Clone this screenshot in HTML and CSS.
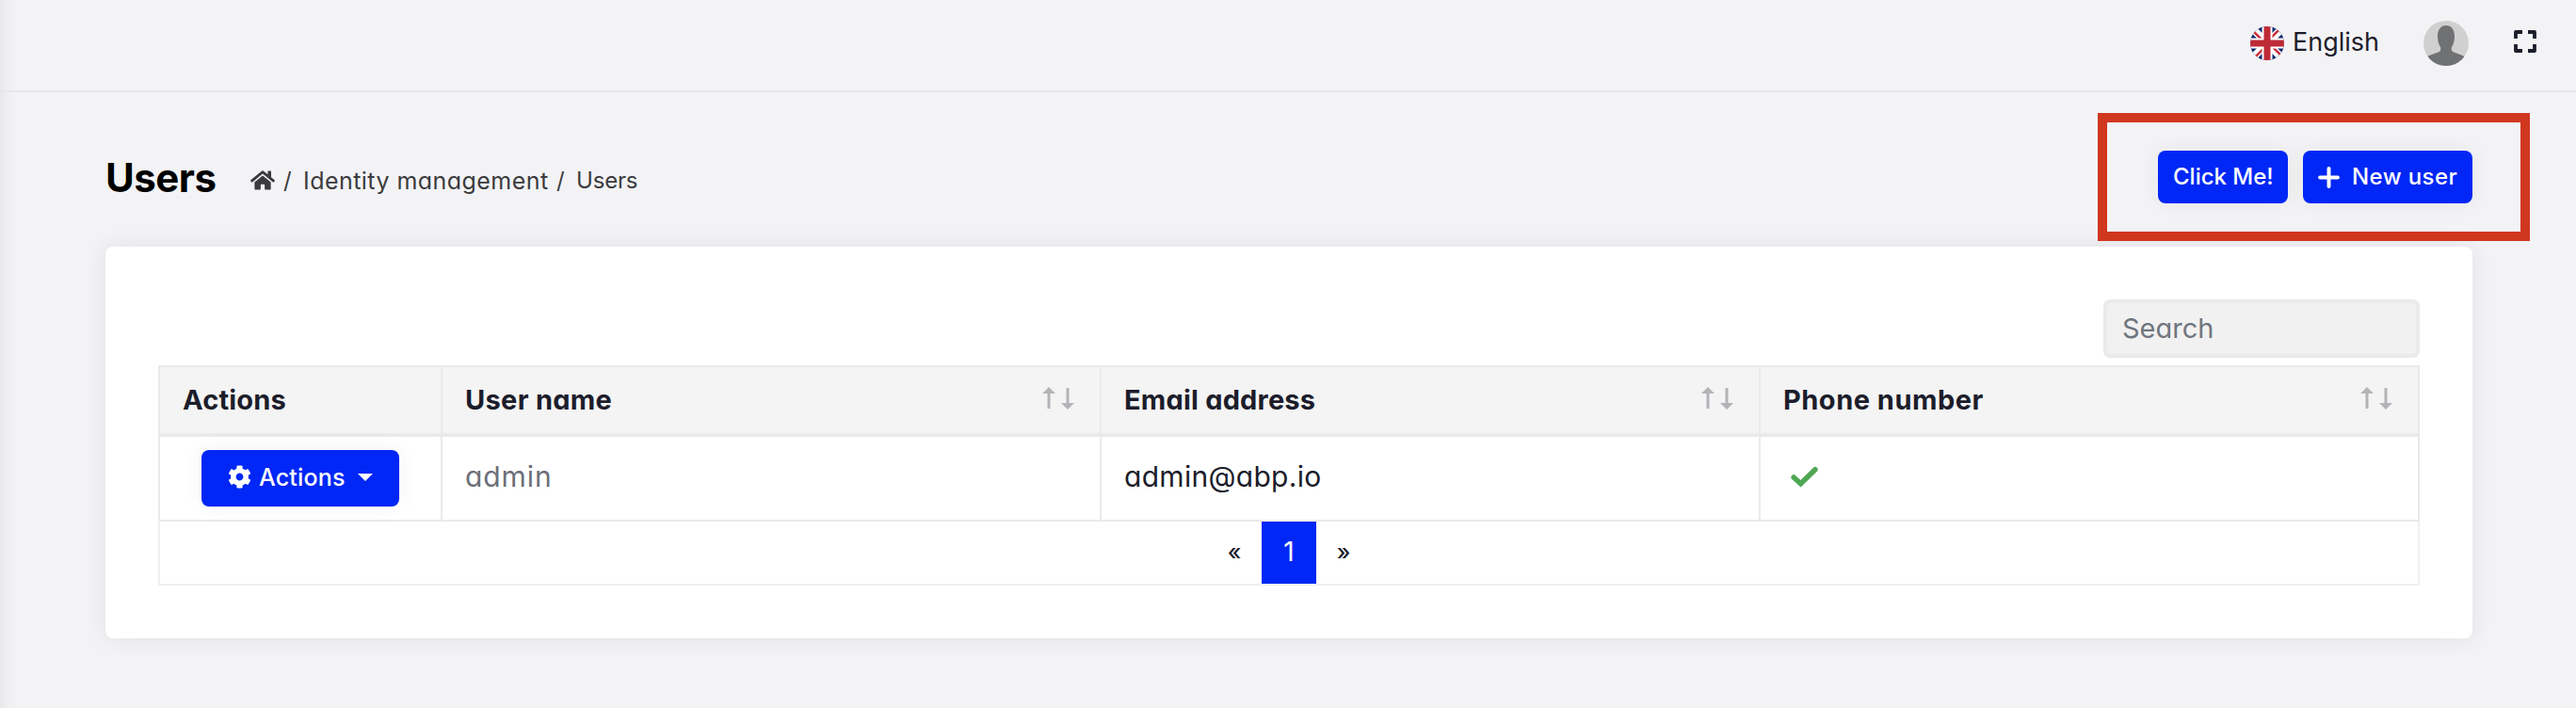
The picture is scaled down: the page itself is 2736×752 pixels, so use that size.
FILE: index.html
```html
<!DOCTYPE html>
<html lang="en">
<head>
<meta charset="utf-8">
<title>Users</title>
<link rel="stylesheet" href="styles.css">
</head>
<body>
<header class="topbar">
  <a class="language">
    <svg class="flag" viewBox="0 0 36 36"><defs><clipPath id="round"><circle cx="18" cy="18" r="18"/></clipPath></defs><g clip-path="url(#round)"><rect width="36" height="36" fill="#0d2a6c"/><path d="M0 0 36 36M36 0 0 36" stroke="#fff" stroke-width="8"/><path d="M0 1.800 18 19.800M36 -1.800 18 16.200M18 16.200 36 34.200M18 19.800 0 37.800" stroke="#c8303e" stroke-width="2.600"/><path d="M18 0V36M0 18H36" stroke="#fff" stroke-width="11"/><path d="M18 0V36M0 18H36" stroke="#bd2b36" stroke-width="7"/></g></svg>
    <span class="language-name">English</span>
  </a>
  <svg class="avatar" viewBox="0 0 48 48"><defs><clipPath id="face"><circle cx="24" cy="24" r="24"/></clipPath></defs><g clip-path="url(#face)"><rect width="48" height="48" fill="#d0d0d0"/><path d="M24 5C29.500 5 33 9.500 33 16.500C33 21.500 31.500 26 29.800 28.200V31.500C31 34 38 35 43.500 38V48H4V38C10 35 17 34 18.200 31.500V28.200C16.500 26 15 21.500 15 16.500C15 9.500 18.500 5 24 5Z" fill="#707173"/></g></svg>
  <svg class="expand" viewBox="0 0 24 24"><path d="M2 9V2H9M15 2H22V9M22 15V22H15M9 22H2V15" fill="none" stroke="#1c1d2b" stroke-width="3.800" stroke-linejoin="round"/></svg>
</header>
<main class="page">
  <div class="page-head">
    <h1 class="title">Users</h1>
    <nav class="crumbs">
      <svg class="home" viewBox="0 0 576 512"><path fill="#3b3b3d" d="M280.400 148.300 96 300.100V464a16 16 0 0 0 16 16l112.100-.3a16 16 0 0 0 15.900-16V368a16 16 0 0 1 16-16h64a16 16 0 0 1 16 16v95.600a16 16 0 0 0 16 16.100L464 480a16 16 0 0 0 16-16V300L295.700 148.300a12.200 12.200 0 0 0-15.300 0zM571.600 251.500 488 182.600V44.100a12 12 0 0 0-12-12h-56a12 12 0 0 0-12 12v72.600L318.500 43a48 48 0 0 0-61 0L4.300 251.500a12 12 0 0 0-1.600 16.900l25.500 31A12 12 0 0 0 45.200 301l235.200-193.700a12.200 12.200 0 0 1 15.300 0L530.900 301a12 12 0 0 0 16.900-1.600l25.500-31a12 12 0 0 0-1.700-16.900z"/></svg>
      <span class="slash">/</span><span class="crumb identity">Identity management</span><span class="slash">/</span><span class="crumb current">Users</span>
    </nav>
    <div class="head-actions">
      <button class="btn click-me"><span>Click Me!</span></button>
      <button class="btn new-user"><svg class="plus" viewBox="0 0 22 22"><path d="M11 2V20M2 11H20" stroke="#fff" stroke-width="3.800" stroke-linecap="round"/></svg><span>New user</span></button>
      <div class="highlight"></div>
    </div>
  </div>
  <section class="card">
    <input class="search" type="text" placeholder="Search">
    <div class="table">
      <div class="row head">
        <div class="cell"><b class="h-actions">Actions</b></div>
        <div class="cell"><b class="h-user">User name</b><svg class="sort" viewBox="0 0 34 24"><path d="M7 23V5M27 1V19" stroke="#b3b4b8" stroke-width="3"/><path d="M0 7 7 0 14 7ZM20 17 27 24 34 17Z" fill="#b3b4b8"/></svg></div>
        <div class="cell"><b class="h-email">Email address</b><svg class="sort" viewBox="0 0 34 24"><path d="M7 23V5M27 1V19" stroke="#b3b4b8" stroke-width="3"/><path d="M0 7 7 0 14 7ZM20 17 27 24 34 17Z" fill="#b3b4b8"/></svg></div>
        <div class="cell"><b class="h-phone">Phone number</b><svg class="sort" viewBox="0 0 34 24"><path d="M7 23V5M27 1V19" stroke="#b3b4b8" stroke-width="3"/><path d="M0 7 7 0 14 7ZM20 17 27 24 34 17Z" fill="#b3b4b8"/></svg></div>
      </div>
      <div class="row body">
        <div class="cell center"><button class="btn menu"><svg class="gear" viewBox="0 0 512 512"><path fill="#fff" d="M487.400 315.700l-42.600-24.600c4.300-23.200 4.300-47 0-70.200l42.600-24.600c4.900-2.800 7.100-8.600 5.500-14-11.100-35.600-30-67.800-54.700-94.600-3.800-4.100-10-5.100-14.800-2.300L380.800 110c-17.900-15.400-38.500-27.300-60.800-35.100V25.800c0-5.600-3.900-10.500-9.400-11.700-36.700-8.200-74.300-7.800-109.200 0-5.500 1.200-9.400 6.100-9.400 11.700V75c-22.200 7.900-42.800 19.800-60.800 35.100L88.700 85.500c-4.900-2.800-11-1.900-14.800 2.300-24.700 26.700-43.600 58.900-54.700 94.600-1.700 5.400.6 11.200 5.500 14L67.300 221c-4.300 23.200-4.300 47 0 70.200l-42.600 24.600c-4.900 2.800-7.100 8.600-5.500 14 11.100 35.600 30 67.800 54.700 94.600 3.800 4.100 10 5.100 14.800 2.300l42.600-24.600c17.900 15.400 38.500 27.300 60.800 35.100v49.200c0 5.600 3.900 10.500 9.400 11.700 36.700 8.200 74.300 7.800 109.200 0 5.500-1.200 9.400-6.100 9.400-11.700v-49.200c22.200-7.900 42.800-19.800 60.800-35.100l42.600 24.600c4.900 2.800 11 1.900 14.800-2.300 24.700-26.700 43.600-58.900 54.700-94.600 1.500-5.500-.7-11.300-5.600-14.100zM256 336c-44.100 0-80-35.900-80-80s35.900-80 80-80 80 35.900 80 80-35.900 80-80 80z"/></svg><span>Actions</span><i class="caret"></i></button></div>
        <div class="cell"><span class="admin">admin</span></div>
        <div class="cell"><span class="email">admin@abp.io</span></div>
        <div class="cell"><svg class="check" viewBox="0 0 28 22"><path d="M3 11.500 10.200 18 25 3.500" fill="none" stroke="#4fa754" stroke-width="5.400" stroke-linecap="round"/></svg></div>
      </div>
      <div class="pager"><span class="step">«</span><span class="page-no">1</span><span class="step">»</span></div>
    </div>
  </section>
</main>
</body>
</html>
```
FILE: styles.css
```css
* { box-sizing: border-box; }
body { margin: 0; height: 752px; overflow: hidden; background: #f3f3f6; color: #1c1d2b; font-family: Inter, "Open Sans", sans-serif; font-feature-settings: "cv11", "ss03"; font-size: 28px; line-height: 1; box-shadow: inset 20px 0 20px -20px rgba(0,0,0,.09); }
svg { display: block; flex: none; }
span, b, h1 { white-space: nowrap; }
.topbar { height: 98px; border-bottom: 2px solid #e6e6ee; display: flex; align-items: center; justify-content: flex-end; padding: 0 42px 4px 0; }
.language { display: flex; align-items: center; width: 184px; }
.flag { width: 36px; height: 36px; margin-right: 9px; }
.language-name { font-size: 27px; margin-top: -3px; }
.avatar { width: 48px; height: 48px; margin-right: 48px; }
.expand { width: 24px; height: 24px; margin-top: -4px; }
.page { padding: 62px 110px 0 112px; }
.page-head { height: 102px; display: flex; align-items: flex-start; }
.title { margin: 9px 0 0; width: 154px; font-size: 42px; line-height: 40px; font-weight: 700; letter-spacing: -.5px; color: #000; }
.crumbs { display: flex; align-items: center; height: 30px; margin-top: 17px; font-size: 24px; color: #3b3b3d; }
.home { width: 26px; height: 23px; margin-right: 9px; margin-top: -1px; }
.slash { width: 22px; }
.identity { width: 268px; margin-left: -1px; margin-right: 1px; font-size: 25px; letter-spacing: .45px; }
.current { margin-left: -1px; letter-spacing: -.2px; }
.head-actions { position: relative; margin-left: auto; display: flex; gap: 16px; }
.highlight { position: absolute; left: -64px; top: -40px; width: 459px; height: 136px; border: 10px solid #d0371f; }
.btn { border: 0; border-radius: 8px; background: #0027f5; color: #fff; height: 56px; padding: 0 16px; display: flex; align-items: center; font: inherit; font-size: 24px; font-weight: 500; font-feature-settings: inherit; box-shadow: 0 0 22px rgba(0,0,0,.06); }
.click-me { width: 138px; }
.new-user { width: 180px; letter-spacing: .4px; }
.plus { width: 23px; height: 23px; margin-right: 13px; }
.card { height: 416px; background: #fff; border-radius: 8px; padding: 56px; box-shadow: 0 0 24px rgba(0,0,0,.08); display: flex; flex-direction: column; }
.search { align-self: flex-end; width: 336px; height: 62px; border: 4px solid #eaeaea; border-radius: 7px; background: #f1f1f1; padding: 0 16px 2px; font: inherit; font-feature-settings: inherit; font-size: 29px; }
.search::placeholder { color: #6f757d; opacity: 1; }
.table { margin-top: 8px; border: 2px solid #f0f0f0; height: 234px; }
.row { display: grid; grid-template-columns: 300px 700px 700px 1fr; margin: 0 -2px; border: solid #eaeaea; }
.head { height: 76px; margin-top: -2px; border-width: 2px 2px 4px; background: #f4f4f4; }
.body { height: 90px; border-width: 0 2px 2px; }
.cell { display: flex; align-items: center; padding: 0 27px 0 24px; border-right: 2px solid #eaeaea; }
.cell:last-child { border-right: 0; }
.head .cell { padding-bottom: 2px; }
.h-actions { font-size: 29px; letter-spacing: .2px; }
.h-user { font-size: 29px; letter-spacing: .3px; }
.h-email { font-size: 29px; letter-spacing: .2px; }
.h-phone { font-size: 29px; letter-spacing: .5px; }
.sort { width: 34px; height: 24px; margin-left: auto; margin-top: -2px; }
.center { justify-content: center; padding: 0; }
.menu { width: 210px; height: 60px; padding: 0 28px; }
.menu span { font-size: 25px; letter-spacing: .2px; margin-top: -2px; }
.gear { width: 25px; height: 25px; margin-right: 8px; margin-top: -3px; }
.caret { margin-left: auto; border: 8px solid transparent; border-top-color: #fff; border-bottom: 0; margin-bottom: 3px; }
.admin, .email { font-size: 30px; margin-top: -4px; }
.admin { color: #6c6f78; letter-spacing: .9px; }
.email { letter-spacing: .3px; }
.check { width: 29px; height: 23px; margin: -4px 0 0 8px; }
.pager { height: 66px; display: flex; justify-content: center; }
.pager span { display: flex; align-items: center; justify-content: center; width: 58px; height: 66px; padding-bottom: 2px; }
.page-no { background: #0027f5; color: #fff; }
.pager .step { font-size: 24px; padding-bottom: 0; font-weight: 500; }
```
